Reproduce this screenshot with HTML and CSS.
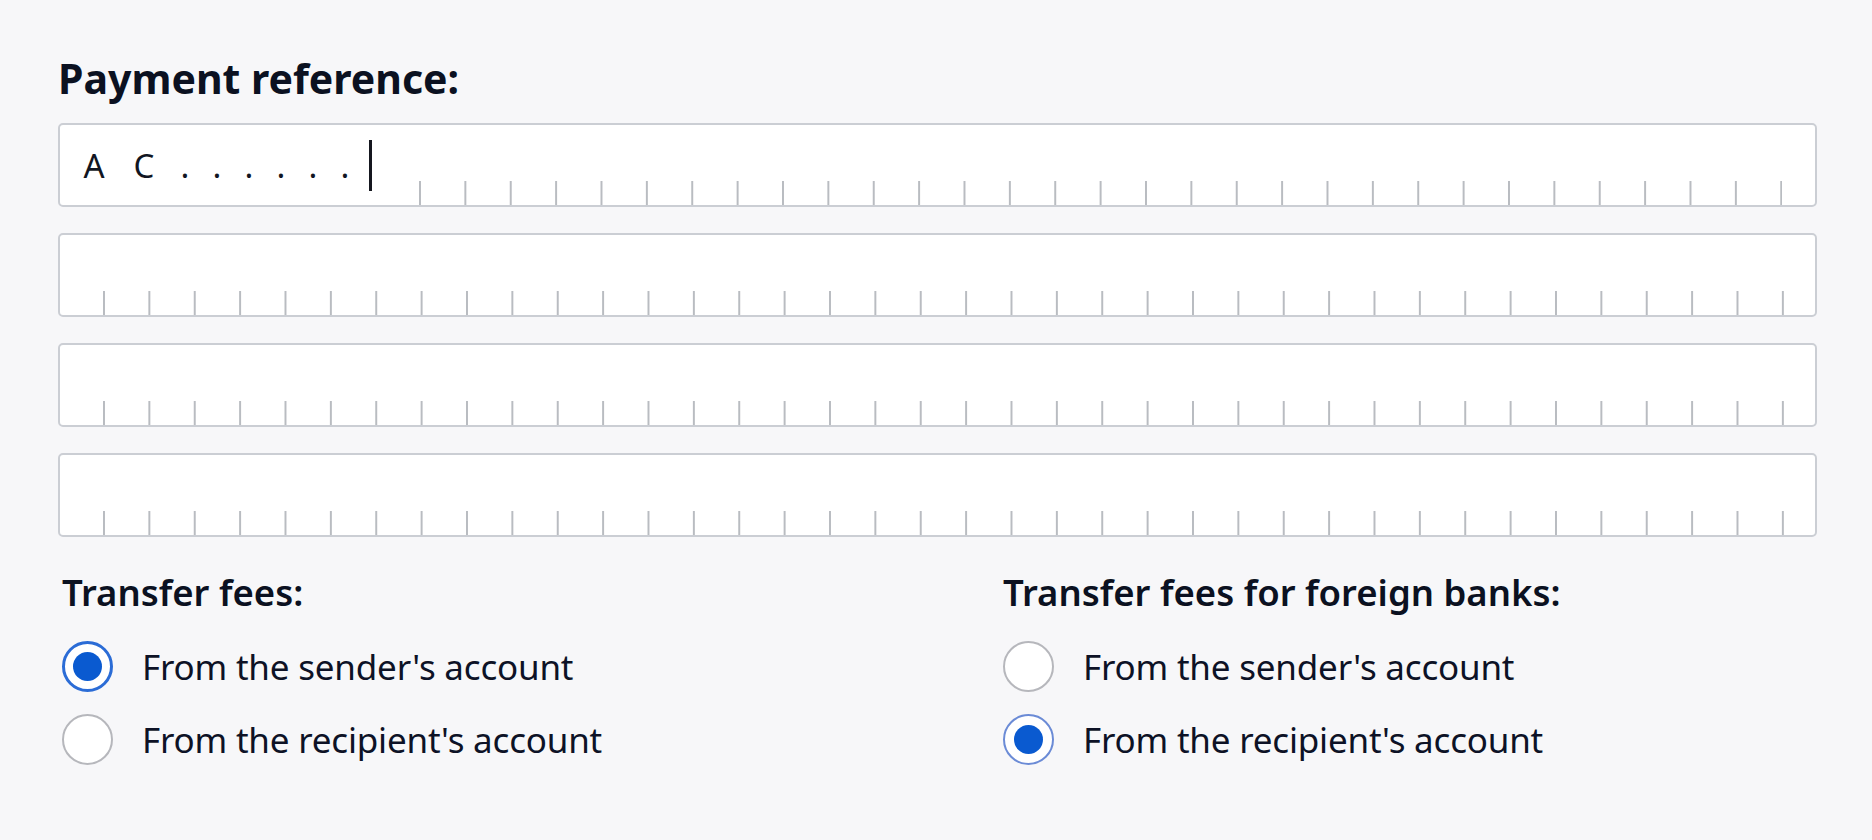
FILE: index.html
```html
<!DOCTYPE html>
<html lang="en">
<head>
<meta charset="utf-8">
<title>Payment reference</title>
<link rel="stylesheet" href="styles.css">
</head>
<body>
<main class="page">
  <h1 class="title">Payment reference:</h1>
  <div class="fields">
    <div class="field typed">
      <div class="entry">
        <span class="glyph wide">A</span>
        <span class="glyph wide">C</span>
        <span class="glyph">.</span>
        <span class="glyph">.</span>
        <span class="glyph">.</span>
        <span class="glyph">.</span>
        <span class="glyph">.</span>
        <span class="glyph">.</span>
        <span class="caret"></span>
      </div>
      <div class="comb short"></div>
    </div>
    <div class="field"><div class="comb"></div></div>
    <div class="field"><div class="comb"></div></div>
    <div class="field"><div class="comb"></div></div>
  </div>

  <div class="options">
    <section class="group">
      <h2 class="subtitle">Transfer fees:</h2>
      <div class="radio-row">
        <span class="radio checked"></span>
        <span class="label">From the sender's account</span>
      </div>
      <div class="radio-row">
        <span class="radio"></span>
        <span class="label">From the recipient's account</span>
      </div>
    </section>
    <section class="group">
      <h2 class="subtitle">Transfer fees for foreign banks:</h2>
      <div class="radio-row">
        <span class="radio"></span>
        <span class="label">From the sender's account</span>
      </div>
      <div class="radio-row">
        <span class="radio checked soft"></span>
        <span class="label">From the recipient's account</span>
      </div>
    </section>
  </div>
</main>
</body>
</html>
```
FILE: styles.css
```css
html, body {
  margin: 0;
  padding: 0;
}

body {
  background: #f7f7f9;
  color: #0d1226;
  font-family: "Noto Sans", "Open Sans", sans-serif;
}

.page {
  padding: 54px 55px 0 58px;
}

.title {
  margin: 0 0 21px 0;
  font-size: 41px;
  line-height: 48px;
  font-weight: 700;
  letter-spacing: 0;
  color: #0b1121;
}

.fields {
  display: flex;
  flex-direction: column;
  gap: 26px;
}

.field {
  box-sizing: border-box;
  height: 84px;
  border: 2px solid #cbced4;
  border-radius: 5px;
  background: #ffffff;
  display: flex;
  align-items: flex-end;
  padding-left: 43px;
}

.field.typed {
  padding-left: 9px;
}

.entry {
  flex: none;
  width: 350px;
  align-self: center;
  display: flex;
  align-items: center;
  font-size: 33px;
  line-height: 1;
  color: #111522;
}

.glyph {
  flex: none;
  width: 32px;
  text-align: center;
}

.glyph.wide {
  width: 50px;
}

.caret {
  flex: none;
  width: 3px;
  height: 51px;
  margin-left: 8px;
  background: #15171f;
}

.comb {
  flex: none;
  width: 1681px;
  height: 24px;
  background: linear-gradient(to right, #b9bcc1 0, #b9bcc1 2px, transparent 2px) 0 0 / 45.38px 100% repeat-x;
}

.comb.short {
  width: 1363px;
}

.options {
  display: grid;
  grid-template-columns: 941px auto;
  margin-top: 33px;
  padding-left: 4px;
}

.subtitle {
  margin: 0 0 16px 0;
  font-size: 36.5px;
  line-height: 44px;
  font-weight: 600;
  letter-spacing: 0;
  color: #0b1121;
}

.radio-row {
  display: flex;
  align-items: center;
  height: 73px;
  gap: 29px;
}

.radio {
  flex: none;
  box-sizing: border-box;
  width: 51px;
  height: 51px;
  border-radius: 50%;
  border: 2.5px solid #b6b7bc;
  background: #ffffff;
  display: flex;
  align-items: center;
  justify-content: center;
}

.radio.checked {
  border: 3px solid #2b6cd6;
}

.radio.checked.soft {
  border: 2.5px solid #6b8bd6;
}

.radio.checked::after {
  content: "";
  width: 29px;
  height: 29px;
  border-radius: 50%;
  background: #0a5ad0;
}

.label {
  font-size: 35px;
  line-height: 42px;
  letter-spacing: -0.2px;
  color: #0d1226;
}
```
